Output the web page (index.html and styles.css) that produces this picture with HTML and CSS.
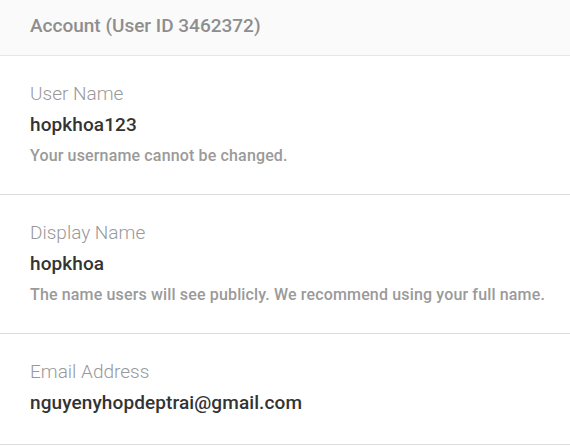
FILE: index.html
```html
<!DOCTYPE html>
<html>
<head>
<meta charset="utf-8">
<link rel="stylesheet" href="styles.css">
</head>
<body>
<div class="card">
  <div class="card-header">Account (User ID 3462372)</div>
  <div class="field">
    <div class="label">User Name</div>
    <div class="value">hopkhoa123</div>
    <div class="help">Your username cannot be changed.</div>
  </div>
  <div class="field">
    <div class="label">Display Name</div>
    <div class="value">hopkhoa</div>
    <div class="help">The name users will see publicly. We recommend using your full name.</div>
  </div>
  <div class="field">
    <div class="label">Email Address</div>
    <div class="value">nguyenyhopdeptrai@gmail.com</div>
  </div>
</div>
</body>
</html>
```
FILE: styles.css
```css
html, body {
  margin: 0;
  padding: 0;
  background: #ffffff;
}
body {
  font-family: Roboto, "Liberation Sans", sans-serif;
}
.card {
  width: 570px;
}
.card-header {
  background: #fafafa;
  height: 56px;
  box-sizing: border-box;
  padding: 14px 30px 0;
  font-size: 19px;
  font-weight: 500;
  color: #8e8e8e;
  line-height: 24px;
  border-bottom: 1px solid #e6e6e6;
}
.field {
  padding: 26px 20px 27px 30px;
  border-bottom: 1px solid #dcdcdc;
}
.field:last-child {
  padding-bottom: 29px;
}
.label {
  font-size: 19px;
  font-weight: 300;
  color: #999999;
  line-height: 24px;
}
.value {
  margin-top: 7px;
  font-size: 19px;
  font-weight: 500;
  color: #333333;
  line-height: 24px;
  letter-spacing: 0.1px;
}
.help {
  margin-top: 8px;
  font-size: 16px;
  font-weight: 500;
  color: #9a9a9a;
  line-height: 22px;
  letter-spacing: 0.15px;
  white-space: nowrap;
}
```
